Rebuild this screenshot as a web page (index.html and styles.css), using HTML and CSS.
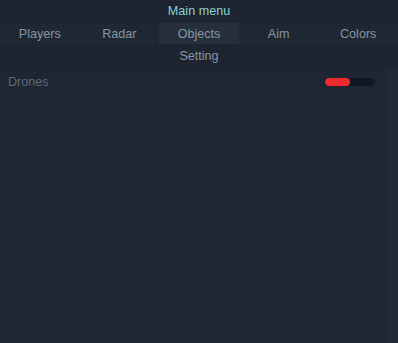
FILE: index.html
```html
<!DOCTYPE html>
<html>
<head>
<meta charset="utf-8">
<link rel="stylesheet" href="styles.css">
</head>
<body>
<div class="menu">
  <div class="title">Main menu</div>
  <div class="tabs">
    <div class="tab">Players</div>
    <div class="tab">Radar</div>
    <div class="tab active">Objects</div>
    <div class="tab">Aim</div>
    <div class="tab">Colors</div>
  </div>
  <div class="subtabs">
    <div class="tab">Setting</div>
  </div>
  <div class="content">
    <div class="list">
      <div class="row">
        <span class="label">Drones</span>
        <div class="bar"><div class="fill" style="width:50%"></div></div>
      </div>
    </div>
    <div class="scroll">
      <div class="scroll-track"></div>
      <div class="scroll-edge"></div>
    </div>
  </div>
</div>
</body>
</html>
```
FILE: styles.css
```css
html, body {
  margin: 0;
  padding: 0;
  background: #1e2530;
}
.menu {
  width: 398px;
  height: 343px;
  display: flex;
  flex-direction: column;
  font-family: "Liberation Sans", Arial, sans-serif;
  font-size: 12.6px;
  background: #1e2530;
}
.title {
  height: 22px;
  line-height: 22px;
  text-align: center;
  color: #8ccfce;
}
.tabs {
  display: grid;
  grid-template-columns: repeat(5, 1fr);
  height: 22px;
  background: #1f2732;
  padding: 1px 0 0 0;
  box-sizing: border-box;
}
.tab {
  display: flex;
  align-items: center;
  justify-content: center;
  color: #8895a2;
  padding-top: 1px;
}
.tab.active {
  background: #26303b;
}
.subtabs {
  display: flex;
  justify-content: center;
  height: 22px;
}
.content {
  flex: 1;
  display: flex;
  margin-top: 4px;
}
.list {
  flex: 1;
  background: #1f2631;
  padding-top: 1px;
}
.row {
  height: 22px;
  display: flex;
  align-items: center;
  justify-content: space-between;
  padding: 0 8px 0 8px;
}
.label {
  color: #5e6976;
}
.bar {
  width: 50px;
  height: 8px;
  border-radius: 4px;
  background: #111822;
  overflow: hidden;
}
.fill {
  height: 100%;
  background: #f0292f;
  border-radius: 4px;
}
.scroll {
  width: 15px;
  display: flex;
}
.scroll-track {
  width: 7px;
  background: #212833;
}
.scroll-edge {
  flex: 1;
  background: #222a35;
}
```
